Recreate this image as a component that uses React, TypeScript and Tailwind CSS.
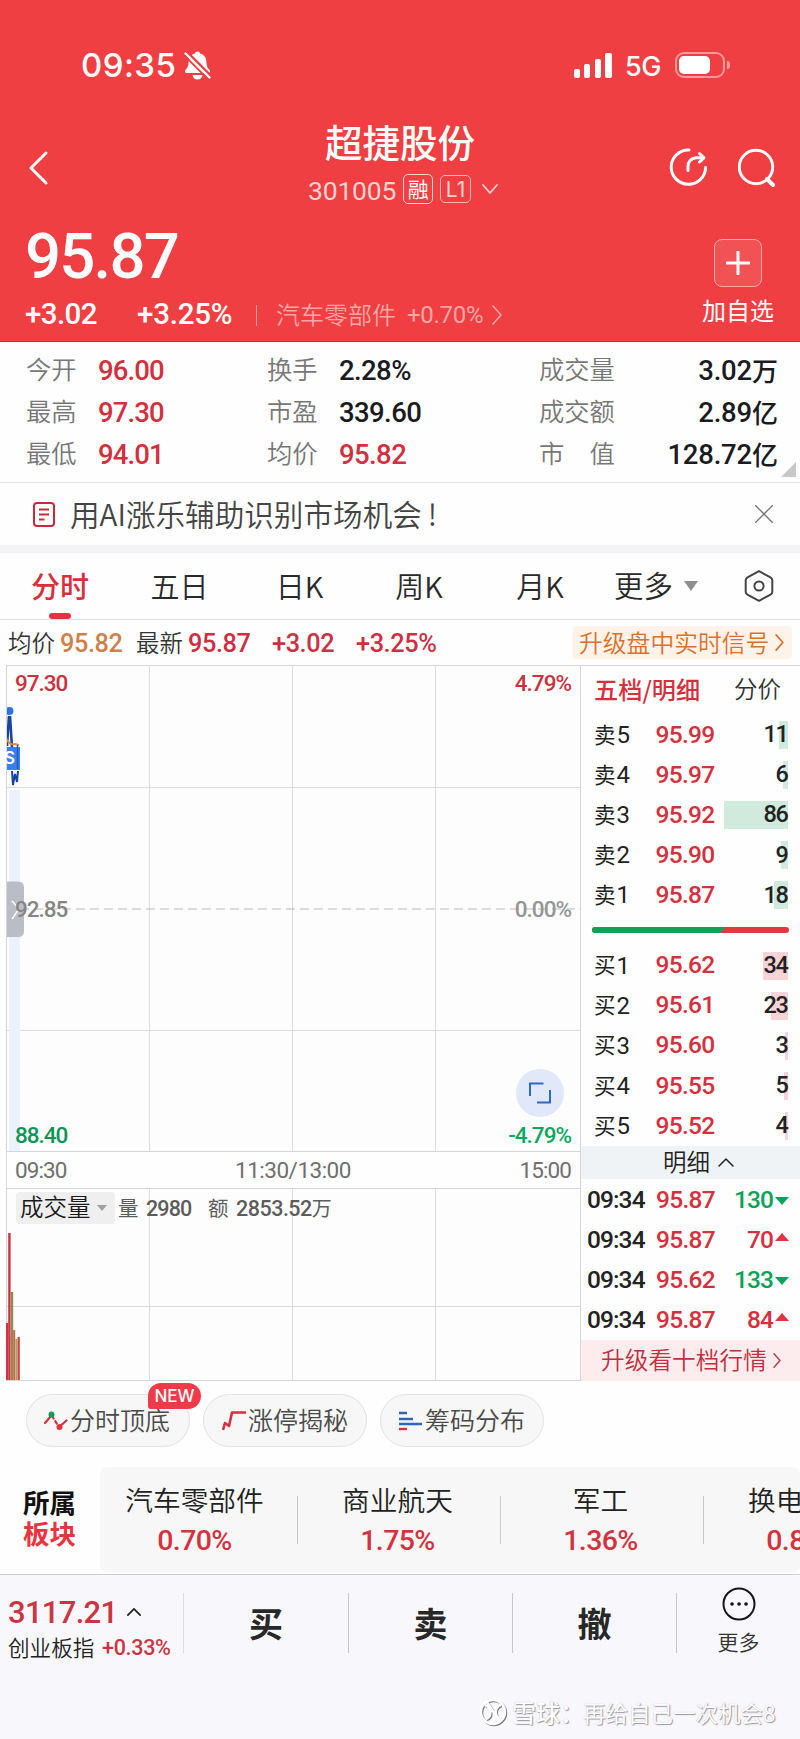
import React from "react";

const num = "font-['Roboto','Noto_Sans_CJK_SC',sans-serif]";
const numMid = "font-['Roboto','Noto_Sans_CJK_SC',sans-serif] font-medium";

function Chevron({ dir, className, w = 2 }: { dir: "right" | "left" | "up" | "down"; className: string; w?: number }) {
  const d = {
    right: "M1 1 L9 10 L1 19",
    left: "M17 1 L2 16 L17 31",
    up: "M1 8 L8 1 L15 8",
    down: "M1 1 L8 9 L15 1",
  }[dir];
  const box = { right: "0 0 10 20", left: "0 0 18 32", up: "0 0 16 9", down: "0 0 16 10" }[dir];
  return (
    <svg viewBox={box} className={`shrink-0 overflow-visible ${className}`} fill="none" stroke="currentColor" strokeWidth={w} strokeLinecap="round" strokeLinejoin="round">
      <path d={d} />
    </svg>
  );
}

function StatusBar() {
  return (
    <div className="flex h-[28px] items-center pl-[81px]">
      <span className="w-[103px] font-['Inter',sans-serif] text-[33px] leading-[28px] font-medium tracking-[0.4px]">09:35</span>
      <svg viewBox="0 0 27 29" className="h-[29px] w-[27px]" fill="#fff">
        <path d="M13.5 0.5 C15 0.5 15.9 1.4 16.1 2.6 C20 3.6 22.2 6.5 22.4 10.8 C22.6 15.5 23.6 17.2 25.6 19 C26.6 20 26 22 24.4 22 H2.6 C1 22 0.4 20.2 1.4 19 C3.5 17 4.5 15.3 4.6 10.8 C4.8 6.5 7 3.6 10.9 2.6 C11.2 1.4 12 0.5 13.5 0.5Z" />
        <path d="M8.5 24 H18.5 C18 27 16 28.5 13.5 28.5 C11 28.5 9 27 8.5 24Z" />
        <path d="M3 0.8 L26 23.8" stroke="#ef3f42" strokeWidth="2.4" />
        <path d="M1.5 2.5 L25.5 26.5" stroke="#fff" strokeWidth="2.4" strokeLinecap="round" />
        <path d="M0 4.2 L23 27.2" stroke="#ef3f42" strokeWidth="1.8" />
      </svg>
      <div className="ml-[363px] flex h-[25px] w-[38px] items-end justify-between">
        <i className="h-[9px] w-[6px] rounded-[2px] bg-white" />
        <i className="h-[14px] w-[6px] rounded-[2px] bg-white" />
        <i className="h-[19px] w-[6px] rounded-[2px] bg-white" />
        <i className="h-[25px] w-[7px] rounded-[2px] bg-white" />
      </div>
      <span className="ml-[13px] w-[50px] pt-[3px] font-['Inter',sans-serif] text-[27px] leading-[28px] font-medium tracking-[-0.5px]">5G</span>
      <div className="flex h-[26px] w-[50px] items-center rounded-[9px] border-2 border-[#f89a9b] pl-[2px]">
        <i className="h-[18px] w-[31px] rounded-[5px] bg-white" />
      </div>
      <i className="ml-[2px] h-[8px] w-[3px] rounded-r-[3px] bg-[#f89a9b]" />
    </div>
  );
}

function Header() {
  return (
    <header className="flex h-[342px] flex-col border-b border-[#d6282c] bg-[#ef3f42] pt-[51px] text-white">
      <StatusBar />
      <div className="mt-[38px] flex h-[100px]">
        <div className="flex w-[308px] pt-[35px] pl-[29px]">
          <Chevron dir="left" className="h-[32px] w-[18px]" w={3} />
        </div>
        <div className="flex w-[190px] flex-col">
          <h1 className="flex h-[52px] items-center justify-center pr-[6px] pb-[4px] text-[37.5px] leading-none font-medium">超捷股份</h1>
          <div className="flex h-[40px] items-center text-[#ffd3d0]">
            <span className={`${num} w-[96px] pt-[4px] text-[26.5px] leading-none tracking-[-0.2px]`}>301005</span>
            <span className="flex h-[30px] w-[30px] items-center justify-center rounded-[5px] border-[1.5px] border-[#ffd3d0] pb-[2px] text-[21px] leading-none text-white">融</span>
            <span className="ml-[7px] flex h-[28px] w-[31px] items-center justify-center rounded-[5px] border border-[#ffb5b4] font-['Inter'] text-[21px] leading-none">L1</span>
            <Chevron dir="down" className="ml-[11px] h-[10px] w-[16px]" w={1.8} />
          </div>
        </div>
        <div className="flex flex-1 gap-[29px] pt-[31px] pl-[171px]">
          <svg viewBox="0 0 40 40" className="h-[40px] w-[40px]" fill="none" stroke="#fff" strokeWidth="3" strokeLinecap="round" strokeLinejoin="round">
            <path d="M20 1.9 A17.2 17.2 0 1 0 36.6 19.5" />
            <path d="M19 22.5 V19 Q19 10.5 27.5 9.8 H34.5" />
            <path d="M30.5 5.5 L35 9.8 L30.5 14" />
          </svg>
          <svg viewBox="0 0 40 40" className="h-[40px] w-[40px]" fill="none" stroke="#fff" strokeWidth="3" strokeLinecap="round">
            <circle cx="18" cy="19" r="16.7" />
            <path d="M29 31 L35 37" strokeWidth="4" />
          </svg>
        </div>
      </div>
      <div className="flex flex-1 pl-[25px]">
        <div className="flex w-[669px] flex-col">
          <div className={`${numMid} mt-[8px] flex h-[64px] items-center text-[63.5px] leading-none tracking-[-1.8px]`}>95.87</div>
          <div className="mt-[6px] flex h-[40px] items-center">
            <span className={`${numMid} w-[112px] text-[29.5px] leading-none tracking-[-0.6px]`}>+3.02</span>
            <span className={`${numMid} w-[119px] text-[29.5px] leading-none tracking-[-0.2px]`}>+3.25%</span>
            <i className="h-[21px] w-px bg-[#f79a9a]" />
            <span className="ml-[19px] w-[131px] pb-[3px] text-[24px] leading-none font-[350] text-[#f9a7a5]">汽车零部件</span>
            <span className={`${num} w-[85px] text-[24px] leading-none tracking-[-0.3px] text-[#f9a7a5]`}>+0.70%</span>
            <Chevron dir="right" className="h-[20px] w-[10px] text-[#f9a7a5]" w={1.6} />
          </div>
        </div>
        <div className="flex w-[88px] flex-col items-center pt-[22px]">
          <div className="flex h-[48px] w-[48px] items-center justify-center rounded-[8px] border-[1.5px] border-[#f9a9a9] bg-[#f15355]">
            <svg viewBox="0 0 24 24" className="h-[24px] w-[24px]" stroke="#fff" strokeWidth="3" strokeLinecap="round"><path d="M12 1 V23 M1 12 H23" /></svg>
          </div>
          <span className="mt-[11px] text-[24px] leading-none">加自选</span>
        </div>
      </div>
    </header>
  );
}

const stats = [
  ["今开", "96.00", "换手", "2.28%", "text-[#1b1b1f]", "成交量", "3.02", "万"],
  ["最高", "97.30", "市盈", "339.60", "text-[#1b1b1f]", "成交额", "2.89", "亿"],
  ["最低", "94.01", "均价", "95.82", "text-[#d2303f]", "市　值", "128.72", "亿"],
];

function Stats() {
  return (
    <section className="relative h-[141px] border-b border-[#e6e6e8] pt-[8px]">
      {stats.map((r) => (
        <div key={r[0]} className="flex h-[41.8px] items-center pl-[26px] leading-none">
          <span className="w-[72px] pb-[4px] text-[25.3px] leading-none font-[350] text-[#777]">{r[0]}</span>
          <span className={`${numMid} w-[169px] text-[27.5px] tracking-[-0.9px] text-[#d2303f]`}>{r[1]}</span>
          <span className="w-[72px] pb-[4px] text-[25.3px] leading-none font-[350] text-[#777]">{r[2]}</span>
          <span className={`${numMid} w-[200px] text-[27.5px] tracking-[-0.6px] ${r[4]}`}>{r[3]}</span>
          <span className="w-[80px] pb-[4px] text-[25.3px] leading-none font-[350] text-[#777]">{r[5]}</span>
          <span className="flex w-[159px] items-center justify-end text-[#1b1b1f]">
            <span className={`${numMid} text-[27.5px] tracking-[-0.2px]`}>{r[6]}</span>
            <span className="pb-[1px] text-[26px] leading-none font-medium">{r[7]}</span>
          </span>
        </div>
      ))}
      <svg viewBox="0 0 15 15" className="absolute right-[4px] bottom-[5px] h-[15px] w-[15px]" fill="#c8c8ca"><path d="M15 0 V15 H0Z" /></svg>
    </section>
  );
}

function Notice() {
  return (
    <section className="flex h-[70px] items-center border-b-[8px] border-[#f3f3f5] pl-[33px]">
      <svg viewBox="0 0 22 25" className="h-[25px] w-[22px]" fill="none" stroke="#c62b3d" strokeWidth="2">
        <rect x="1" y="1" width="20" height="23" rx="3" />
        <path d="M6 7.5 H16 M6 12.5 H16 M6 17.5 H11.5" />
      </svg>
      <span className="ml-[15px] flex-1 pb-[1px] text-[29.6px] leading-none font-[350] whitespace-nowrap text-[#444]">用AI涨乐辅助识别市场机会<span className="ml-[6px]">!</span></span>
      <svg viewBox="0 0 18 18" className="mr-[27px] h-[18px] w-[18px]" stroke="#777" strokeWidth="1.4"><path d="M0 0 L18 18 M18 0 L0 18" /></svg>
    </section>
  );
}

function Tabs() {
  return (
    <nav className="flex h-[67px] items-center border-b border-[#dedee0] text-[29px] leading-none font-[350] text-[#2a2a2a]">
      <div className="relative flex h-full w-[120px] items-center justify-center pb-[1px] font-medium text-[#d92f3d]">
        分时
        <i className="absolute bottom-0 left-[49px] h-[6px] w-[22px] rounded-full bg-[#e7333f]" />
      </div>
      <span className="w-[119px] pb-[1px] text-center">五日</span>
      <span className="w-[121px] pb-[1px] text-center">日K</span>
      <span className="w-[118px] pb-[1px] text-center">周K</span>
      <span className="w-[124px] pb-[1px] text-center">月K</span>
      <span className="ml-[12px] w-[70px] pb-[2px] text-[29.4px]">更多</span>
      <svg viewBox="0 0 14 10" className="h-[10px] w-[14px]" fill="#8f8f91"><path d="M0 0 H14 L7 10Z" /></svg>
      <svg viewBox="0 0 30 32" className="ml-[46px] h-[32px] w-[30px]" fill="none" stroke="#444" strokeWidth="2" strokeLinejoin="round">
        <path d="M15 1.2 L26.5 7.3 Q28.3 8.4 28.3 10.3 V21.7 Q28.3 23.6 26.5 24.7 L15 30.8 L3.5 24.7 Q1.7 23.6 1.7 21.7 V10.3 Q1.7 8.4 3.5 7.3Z" />
        <circle cx="15" cy="16" r="4.6" />
      </svg>
    </nav>
  );
}

function QuoteLine() {
  const n = `${numMid} text-[25.3px] pt-[2px] tracking-[-0.4px]`;
  return (
    <div className="flex h-[45px] items-center pl-[8px] leading-none whitespace-nowrap text-[#333]">
      <span className="w-[52px] text-[23.5px] leading-none font-[350]">均价</span>
      <span className={`${n} w-[76px] text-[#cf814c]`}>95.82</span>
      <span className="w-[52px] text-[23.5px] leading-none font-[350]">最新</span>
      <span className={`${n} w-[84px] text-[#cc3045]`}>95.87</span>
      <span className={`${n} w-[84px] text-[#cc3045]`}>+3.02</span>
      <span className={`${n} w-[217px] text-[#cc3045]`}>+3.25%</span>
      <span className="flex h-[33px] w-[219px] items-center rounded-[4px] bg-[#fdf3ea] pl-[6px] text-[#d9722a]">
        <span className="w-[196px] pb-[1px] text-[23.8px] leading-none font-[350]">升级盘中实时信号</span>
        <Chevron dir="right" className="h-[17px] w-[9px]" w={2} />
      </span>
    </div>
  );
}

function Chart() {
  const label = `${numMid} absolute leading-[22px] text-[22.5px] tracking-[-1px]`;
  const vline = "absolute top-0 bottom-0 w-px bg-[#dcdcde]";
  return (
    <div className="w-[580px] shrink-0 pl-[6px]">
      <div className="relative h-[487px] border border-r-0 border-[#d6d6d8] bg-[#fdfdfd]">
        <i className={`${vline} left-[142px]`} />
        <i className={`${vline} left-[285px]`} />
        <i className={`${vline} left-[428px]`} />
        <i className="absolute top-[121px] right-0 left-0 h-px bg-[#dcdcde]" />
        <i className="absolute top-[364px] right-0 left-0 h-px bg-[#dcdcde]" />
        <i className="absolute top-[124px] bottom-0 left-[2px] w-[11px] bg-[#ebf1fd]" />
        <svg viewBox="0 0 574 487" className="absolute top-0 left-0 h-[487px] w-[574px]" fill="none">
          <path d="M-1 243 H574" stroke="#b9b9bb" strokeWidth="1.2" strokeDasharray="9 5" />
          <path d="M-1 215.5 H11 Q17 215.5 17 221.5 V265 Q17 271 11 271 H-1Z" fill="#babdc5" />
          <path d="M5 235 L12 243 L5 253" stroke="#fff" strokeWidth="1.6" />
          <circle cx="2.5" cy="45" r="4" fill="#2a74e4" />
          <path d="M2 50 L0 80 M3 50 L5 82" stroke="#17449c" strokeWidth="2.6" />
          <path d="M-1 72 Q3 80 8 78 L12 79" stroke="#e08350" strokeWidth="2" />
          <rect x="-1" y="81" width="14" height="23" fill="#3b80e8" />
          <path d="M10.5 79 V103" stroke="#1f5bc4" strokeWidth="1.5" />
          <path d="M5 105 L6 119 L8 108 L10 116 L11 105" stroke="#17449c" strokeWidth="2" />
        </svg>
        <span className="absolute top-[81px] left-[-1px] w-[10px] overflow-hidden font-['Inter'] text-[17px] leading-[23px] font-semibold text-white"><span className="-ml-[2px]">S</span></span>
        <span className={`${label} top-[6px] left-[8px] text-[#c93340]`}>97.30</span>
        <span className={`${label} top-[6px] right-[9px] text-[#c93340]`}>4.79%</span>
        <span className={`${label} top-[232px] left-[8px] text-[#858585]`}>92.85</span>
        <span className={`${label} top-[232px] right-[9px] text-[#959595]`}>0.00%</span>
        <span className={`${label} top-[458px] left-[8px] text-[#0d9458]`}>88.40</span>
        <span className={`${label} top-[458px] right-[9px] text-[#10a560]`}>-4.79%</span>
        <div className="absolute top-[403px] left-[509px] flex h-[48px] w-[48px] items-center justify-center rounded-full bg-[#e0e8fa]">
          <svg viewBox="0 0 22 22" className="h-[22px] w-[22px]" fill="none" stroke="#2d69c8" strokeWidth="2"><path d="M1 14 V1.5 H14.5 M21 8 V20.5 H8" /></svg>
        </div>
      </div>
      <div className={`${num} flex h-[36px] items-center justify-between border-l border-[#dcdcde] pt-[1px] pr-[9px] pl-[8px] text-[22.5px] leading-none tracking-[-0.9px] text-[#6f6f6f]`}>
        <span>09:30</span>
        <span className="tracking-[-0.5px]">11:30/13:00</span>
        <span>15:00</span>
      </div>
      <div className="relative h-[193px] border border-r-0 border-[#d6d6d8] bg-[#fdfdfd]">
        <i className={`${vline} left-[142px]`} />
        <i className={`${vline} left-[285px]`} />
        <i className={`${vline} left-[428px]`} />
        <i className="absolute top-[117px] right-0 left-0 h-px bg-[#dcdcde]" />
        <svg viewBox="0 0 14 191" className="absolute bottom-0 left-[-1px] h-[191px] w-[14px]">
          <rect x="0" y="134" width="2.2" height="57" fill="#cf333f" />
          <rect x="2.2" y="44" width="2.4" height="147" fill="#cf333f" />
          <rect x="4.8" y="103" width="2.4" height="88" fill="#8d8a55" />
          <rect x="7.2" y="141" width="2" height="50" fill="#c6683f" />
          <rect x="9.4" y="150" width="2" height="41" fill="#b39a58" />
          <rect x="11.6" y="148" width="2.2" height="43" fill="#c74540" />
        </svg>
        <div className="relative flex h-[38px] items-center pl-[9px] leading-none text-[#5c5c5c]">
          <span className="flex h-[32px] w-[99px] items-center rounded-[4px] bg-[#efefef] pl-[4px]">
            <span className="w-[77px] pb-[2px] text-[23.5px] leading-none font-[350] text-[#1a1a1a]">成交量</span>
            <svg viewBox="0 0 10 6" className="h-[6px] w-[10px]" fill="#a0a0a2"><path d="M0 0 H10 L5 6Z" /></svg>
          </span>
          <span className="ml-[3px] w-[28px] pb-[1px] text-[20.5px] leading-none">量</span>
          <span className={`${numMid} w-[62px] pt-[1px] text-[21.5px] tracking-[-0.9px]`}>2980</span>
          <span className="w-[28px] pb-[1px] text-[20.5px] leading-none">额</span>
          <span className={`${numMid} pt-[1px] text-[21.5px] tracking-[-0.5px]`}>2853.52</span>
          <span className="text-[20px] leading-none">万</span>
        </div>
      </div>
    </div>
  );
}

type Level = [string, string, string, string];
const asks: Level[] = [
  ["卖", "5", "95.99", "11"], ["卖", "4", "95.97", "6"], ["卖", "3", "95.92", "86"], ["卖", "2", "95.90", "9"], ["卖", "1", "95.87", "18"],
];
const bids: Level[] = [
  ["买", "1", "95.62", "34"], ["买", "2", "95.61", "23"], ["买", "3", "95.60", "3"], ["买", "4", "95.55", "5"], ["买", "5", "95.52", "4"],
];

function LevelRow({ row, tone }: { row: Level; tone: string }) {
  return (
    <div className="flex h-[40.1px] items-center pl-[13px] leading-none text-[#222]">
      <span className="pb-[3px] text-[21.5px] leading-none">{row[0]}</span>
      <span className={`${num} w-[40px] pl-px text-[24px]`}>{row[1]}</span>
      <span className={`${numMid} w-[69px] text-[24.5px] tracking-[-0.7px] text-[#d6303f]`}>{row[2]}</span>
      <span className="relative flex h-[28px] w-[63px] items-center justify-end">
        <i className={`absolute top-0 right-0 h-full ${tone}`} style={{ width: Math.max(2, Number(row[3]) * 0.735) }} />
        <span className={`${numMid} relative text-[23.5px] tracking-[-1.4px]`}>{row[3]}</span>
      </span>
    </div>
  );
}

const trades: [string, string, boolean][] = [["95.87", "130", false], ["95.87", "70", true], ["95.62", "133", false], ["95.87", "84", true]];

function OrderBook() {
  return (
    <aside className="flex h-[716px] w-[220px] shrink-0 flex-col border-t border-l border-[#d6d6d8] whitespace-nowrap">
      <div className="flex h-[49px] shrink-0 items-center pb-[3px] pl-[13px] text-[24.2px] leading-none">
        <span className="w-[140px] font-medium text-[#d6303f]">五档/明细</span>
        <span className="text-[23.5px] leading-none font-[350] text-[#333]">分价</span>
      </div>
      {asks.map((r) => <LevelRow key={r[0] + r[1]} row={r} tone="bg-[#d0eadd]" />)}
      <div className="mt-[12px] mb-[12px] ml-[11px] flex h-[6px] w-[197px] shrink-0 overflow-hidden rounded-full bg-[#e63640]">
        <svg viewBox="0 0 134 6" className="h-[6px] w-[134px]" fill="#0fa25b"><path d="M0 0 H134 L128 6 H0Z" /></svg>
      </div>
      {bids.map((r) => <LevelRow key={r[0] + r[1]} row={r} tone="bg-[#fad3d9]" />)}
      <div className="flex h-[33px] shrink-0 items-center bg-[#f0f3f6] pl-[82px] text-[#222]">
        <span className="w-[55px] pb-[2px] text-[23.5px] leading-none font-[350]">明细</span>
        <Chevron dir="up" className="h-[9px] w-[16px]" w={1.5} />
      </div>
      <div className="h-px shrink-0" />
      {trades.map(([price, qty, up], i) => (
        <div key={i} className={`${numMid} flex h-[40px] shrink-0 items-center pl-[6px] text-[24.5px] leading-none tracking-[-0.9px]`}>
          <span className="w-[69px] text-[#222]">09:34</span>
          <span className="w-[57px] tracking-[-0.7px] text-[#d6303f]">{price}</span>
          <span className={`flex w-[60px] justify-end ${up ? "text-[#d6303f]" : "text-[#0fa05a]"}`}>{qty}</span>
          <svg viewBox="0 0 14 8" className={`ml-[2px] h-[8px] w-[14px] ${up ? "-mt-[6px]" : "mt-[3px]"}`} fill={up ? "#e03540" : "#0fa05a"}><path d={up ? "M0 8 L7 0 L14 8Z" : "M0 0 L7 8 L14 0Z"} /></svg>
        </div>
      ))}
      <div className="flex flex-1 items-center bg-[#fceced] pl-[20px] text-[#c22f40]">
        <span className="w-[172px] pb-[2px] text-[23.7px] leading-none font-[350]">升级看十档行情</span>
        <Chevron dir="right" className="h-[15px] w-[8px]" w={1.8} />
      </div>
    </aside>
  );
}

function Pills() {
  const pill = "relative flex h-[53px] items-center rounded-full border border-[#e2e2e4] bg-[#f7f7f7] text-[25px] leading-none font-[350] text-[#4a4a4a]";
  return (
    <div className="flex gap-[13px] pt-[13px] pl-[26px] whitespace-nowrap">
      <div className={`${pill} w-[164px] pl-[17px]`}>
        <svg viewBox="0 0 24 20" className="h-[20px] w-[24px]" fill="none" strokeWidth="2.2" strokeLinecap="round">
          <path d="M1 12 L7 5" stroke="#d3333f" /><path d="M8 5 L15 16" stroke="#d3333f" strokeDasharray="3 3" /><path d="M15 16 L22.5 9.5" stroke="#d3333f" />
          <circle cx="7.5" cy="3.5" r="3" fill="#159c56" /><circle cx="15.5" cy="16" r="3" fill="#e03540" />
        </svg>
        <span className="ml-[2px] pb-[2px]">分时顶底</span>
        <span className="absolute -top-[12px] left-[121px] flex h-[26px] w-[53px] items-center justify-center rounded-[13px] rounded-bl-[3px] bg-[#f03a49] font-['Inter'] text-[17px] leading-none font-medium text-white">NEW</span>
      </div>
      <div className={`${pill} w-[164px] pl-[18px]`}>
        <svg viewBox="0 0 24 20" className="h-[20px] w-[24px]" fill="none" stroke="#d3333f" strokeWidth="2.6" strokeLinejoin="round"><path d="M1 19 L3 12 L7 15 L10 1.5 H24" /></svg>
        <span className="ml-[2px] pb-[2px]">涨停揭秘</span>
      </div>
      <div className={`${pill} w-[164px] pl-[18px]`}>
        <svg viewBox="0 0 23 20" className="h-[20px] w-[23px]" strokeWidth="2.4" stroke="#2f66b8"><path d="M0 2 H8 M0 8 H14 M0 13 H23" /><path d="M0 18 H8" stroke="#d3333f" /></svg>
        <span className="ml-[3px] pb-[2px]">筹码分布</span>
      </div>
    </div>
  );
}

function Sectors() {
  const list = [["汽车零部件", "0.70%"], ["商业航天", "1.75%"], ["军工", "1.36%"], ["换电概念", "0.82%"]];
  return (
    <section className="mt-[20px] flex h-[105px]">
      <div className="flex w-[100px] flex-col pt-[19px] pl-[23px] text-[26.5px] leading-[31px] font-bold">
        <span className="text-[#111]">所属</span>
        <span className="text-[#e7353f]">板块</span>
      </div>
      <div className="flex w-[700px] overflow-hidden rounded-[7px] bg-[#f7f7f7]">
        {list.map(([name, pct], i) => (
          <div key={name} className={`flex shrink-0 items-center ${i === 0 ? "w-[198px]" : "w-[203px]"}`}>
            <div className={`flex flex-1 flex-col items-center pt-[2px] ${i === 0 ? "pr-[8px]" : "pr-[3px]"}`}>
              <span className="flex h-[40px] items-center text-[27.7px] leading-none font-[350] whitespace-nowrap text-[#222]">{name}</span>
              <span className={`${numMid} mt-[2px] flex h-[40px] items-center text-[28.5px] leading-none tracking-[-0.6px] text-[#d3333f]`}>{pct}</span>
            </div>
            <i className="h-[48px] w-px bg-[#c9c9cb]" />
          </div>
        ))}
      </div>
    </section>
  );
}

function Footer() {
  const act = "flex h-[60px] items-center justify-center border-l pb-[1px] text-[34px] leading-none font-bold text-[#282828]";
  return (
    <footer className="mt-[2px] flex h-[165px] flex-col border-t border-[#cfcfd3] bg-[#f8f8fc]">
      <div className="flex h-[98px] pt-[18px]">
        <div className="w-[183px] pt-[2px] pl-[8px]">
          <div className="flex h-[34px] items-center text-[#cc3442]">
            <span className={`${numMid} w-[119px] text-[31px] leading-none tracking-[-0.7px]`}>3117.21</span>
            <Chevron dir="up" className="h-[8px] w-[14px] text-[#222]" w={2} />
          </div>
          <div className="flex h-[38px] items-center whitespace-nowrap">
            <span className="w-[94px] pb-[3px] text-[21.6px] leading-none font-[350] text-[#222]">创业板指</span>
            <span className={`${numMid} pb-[1px] text-[21.5px] leading-none tracking-[-0.3px] text-[#cc3442]`}>+0.33%</span>
          </div>
        </div>
        <div className={`${act} w-[165px] border-[#dddde2]`}>买</div>
        <div className={`${act} w-[164px] border-[#c6c6ca]`}>卖</div>
        <div className={`${act} w-[164px] border-[#c6c6ca]`}>撤</div>
        <div className="flex h-[60px] flex-1 flex-col items-center border-l border-[#c6c6ca]">
          <svg viewBox="0 0 34 34" className="-mt-[6px] h-[34px] w-[34px] shrink-0" fill="none" stroke="#161616" strokeWidth="2">
            <circle cx="17" cy="17" r="15.5" />
            <path d="M10 17 H10.1 M17 17 H17.1 M24 17 H24.1" strokeWidth="3.6" strokeLinecap="round" />
          </svg>
          <span className="mt-[10px] text-[21px] leading-none font-[350] text-[#333]">更多</span>
        </div>
      </div>
      <div className="flex h-[50px] items-center pt-[28px] pl-[479px] leading-none whitespace-nowrap text-white [text-shadow:1px_1px_1px_#98989e,0_0_1px_#b5b5bb]">
        <svg viewBox="0 0 28 28" className="h-[28px] w-[28px] shrink-0 drop-shadow-[1px_1px_0.5px_#77777c]" fill="none" stroke="#fff" strokeWidth="2.5">
          <circle cx="14" cy="14" r="12" />
          <path d="M6 7 C13 9 13 19 7 21 M22 7 C15 9 15 19 22 21 M8 4 L21 24" />
        </svg>
        <span className="ml-[5px] w-[71px] text-[24px] leading-none font-medium">雪球：</span>
        <span className="text-[22.5px] leading-none">再给自己一次机会8</span>
      </div>
    </footer>
  );
}

export default function App() {
  return (
    <div className="h-[1739px] w-[800px] overflow-hidden bg-[#fefefe] font-['Noto_Sans_CJK_SC',sans-serif]">
      <Header />
      <Stats />
      <Notice />
      <Tabs />
      <QuoteLine />
      <main className="flex h-[716px]">
        <Chart />
        <OrderBook />
      </main>
      <Pills />
      <Sectors />
      <Footer />
    </div>
  );
}
